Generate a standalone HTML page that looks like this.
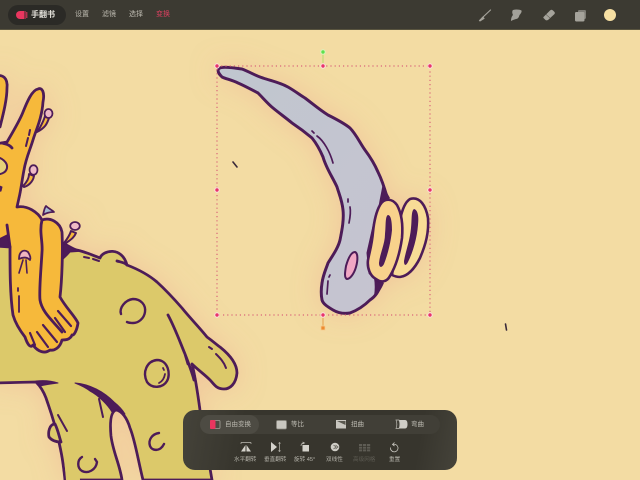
<!DOCTYPE html>
<html lang="zh">
<head>
<meta charset="utf-8">
<title>手翻书</title>
<style>
html,body{margin:0;padding:0;width:640px;height:480px;overflow:hidden;background:#f3dca3}
body{position:relative;font-family:"Liberation Sans","Noto Sans CJK SC",sans-serif}
#wrap{position:absolute;left:0;top:0;width:640px;height:480px;overflow:hidden;filter:blur(.35px)}
svg{position:absolute;left:0;top:0}
.t{position:absolute;white-space:nowrap;line-height:10px;height:10px}
#bar{position:absolute;left:0;top:0;width:640px;height:29px;background:#3c3a32;border-bottom:1px solid #59543f}
#pill{position:absolute;left:8px;top:5px;width:58px;height:20px;border-radius:10px;background:#2b2a26}
#panel{position:absolute;left:183px;top:410px;width:274px;height:60px;border-radius:12px;background:linear-gradient(100deg,#45433a 0%,#37352d 22%,#37352d 85%,#45433a 100%)}
#tabs{position:absolute;left:17px;top:5px;width:240px;height:19px;border-radius:10px;background:#413f37}
#sel{position:absolute;left:17px;top:5px;width:59px;height:19px;border-radius:10px;background:#4d4b43}
.top{font-size:7px;color:#bdbab0;top:10px}
.tab{font-size:6.5px;color:#bdbbb2;top:420px}
.low{font-size:5.6px;color:#b5b3aa;top:455px}
</style>
</head>
<body>
<div id="wrap">
<svg width="640" height="480" viewBox="0 0 640 480">
<defs>
<filter id="g" x="-25%" y="-25%" width="150%" height="150%"><feDropShadow dx="0" dy="0" stdDeviation="13" flood-color="#efae92" flood-opacity=".5"/></filter>
<linearGradient id="h" x1="0" y1="0" x2="1" y2="1"><stop offset="0" stop-color="#c0c6cf"/><stop offset="1" stop-color="#c6c4d0"/></linearGradient>
</defs>
<g filter="url(#g)" stroke="#4d1a58" stroke-width="2.8" stroke-linejoin="round" stroke-linecap="round">
<!-- body -->
<path fill="#dcc96a" d="M-5 245 L63 252 C72 246 85 252 100 258 C103 250 122 246 127 265 C140 270 150 276 157 282 C168 292 175 300 182 308 C190 318 200 328 207 337 C214 342 217 345 220 347 C230 355 237 364 237 373 C236 384 230 389 224 389 C216 389 214 384 210 380 C204 374 198 370 192 364 C195 375 197 388 200 410 L212 480 L143 480 C138 460 135 440 130 428 C127 418 122 411 116 410 C110 412 110 425 111 436 C113 452 120 465 122 480 L65 480 C63 462 62 455 58 438 C54 420 50 410 46 398 C43 390 40 386 36 382 L-5 383 Z"/>
<path fill="#4d1a58" stroke-width="1" d="M36 381 C45 380 52 381 58 383 C50 384 44 385 40 386 Z"/>
<path fill="#dcc96a" stroke="none" d="M58 385 L75 385 L80 480 L66 480 Z"/>
<path fill="#4d1a58" stroke-width="1" d="M75 383 C90 384 104 392 114 402 C119 406 122 409 125 414 C120 410 115 409 112 412 C108 405 98 395 90 391 C85 387 80 385 75 383 Z"/>
<path fill="#4d1a58" stroke-width="1" d="M63 242 C70 246 78 251 84 251 L70 252 C67 256 64 258 62 260 Z"/>
<path fill="none" d="M127 265 C124 262 120 262 117 261"/>
<path fill="none" stroke-width="2" d="M84 257 L89 258 M93 259 L99 261"/>
<path fill="none" d="M168 315 C175 328 180 342 185 354 C188 362 192 372 194 380 M185 354 L188 364"/>
<path fill="none" stroke-width="2" d="M209 347 L212 349 M216 354 C220 358 224 362 226 368"/>
<path fill="none" stroke-width="2" d="M99 399 L103 417 M58 415 L67 431"/>
<path fill="#dcc96a" d="M55 424 C49 424 48 433 49 437 C52 441 56 442 61 442 C59 436 58 430 55 424 Z"/>
<path fill="none" stroke-width="2.4" d="M121 314 C119 308 125 300 133 299 C141 299 146 305 145 312 C144 319 138 323 133 323 C131 323 129 323 127 322"/>
<path fill="none" stroke-width="2.4" d="M147 382 C142 372 147 361 157 360 C168 360 171 374 167 381 C163 388 152 389 147 382 Z"/>
<path fill="none" stroke-width="1.8" d="M163 368 L164 370 M165 374 C164 380 161 382 159 383"/>
<path fill="none" stroke-width="2.4" d="M159 433 C152 434 148 440 150 446 C152 451 160 452 164 444"/>
<path fill="none" stroke-width="2.4" d="M82 457 C77 460 77 468 82 471 C88 474 96 470 97 462 L95 459"/>
<!-- figure -->
<path fill="#f6b93a" d="M-5 76 C3 74 8 78 7 88 C7 100 3 115 0 127 L-5 127 Z"/>
<path fill="#f6b93a" d="M-5 144 L7 142 C14 130 20 120 23 112 C27 102 32 90 38 89 C42 87 45 92 43 102 C42 118 36 130 33 140 C30 150 26 158 24 170 C22 180 21 190 19 198 L17 207 C27 205 38 212 42 220 C50 217 60 222 62 232 C63 250 62 280 60 297 C66 308 75 316 78 323 C77 330 74 336 72 335 C70 340 65 340 62 340 C60 348 54 351 50 350 C45 354 38 352 33 345 C30 349 27 343 25 337 C18 328 15 322 13 315 C10 295 10 270 10 247 L-5 246 Z"/>
<path fill="none" d="M42 220 C39 232 43 242 42 252 C41 270 39 290 40 300 C42 312 52 320 62 332 M7 225 L10 247"/>
<path fill="#4d1a58" stroke-width="1" d="M-5 241 L7 235 L10 247 L-5 247 Z"/>
<path fill="none" d="M2 143 C6 144 10 145 12 148"/>
<path fill="none" stroke-width="2" d="M30 130 L29 135 M28 138 L26 146"/>
<path fill="none" stroke-width="1.8" d="M18 288 L18 291 M19 296 L19 312"/>
<path fill="none" stroke-width="2.2" d="M30 333 L35 345 M37 332 L48 347 M43 325 L57 342 M55 318 L65 332 M58 311 L71 326"/>
<path fill="#e6d27a" stroke-width="2" d="M-5 157 C2 157 8 163 7 168 C6 173 0 175 -5 174 Z"/>
<path fill="#4d1a58" stroke-width="1" d="M-3 185 L2 187 L1 191 L-3 192 Z"/>
<!-- mushrooms -->
<path fill="#f6b93a" stroke-width="2" d="M38 131 C42 124 44 120 45 116 L49 118 C47 124 45 128 37 132 Z"/>
<ellipse cx="48.500" cy="113.500" rx="4" ry="4.500" fill="#eebac6" stroke-width="1.800"/>
<path fill="#f6b93a" stroke-width="2" d="M23 186 C27 182 29 178 29 174 L34 176 C33 182 28 186 24 187 Z"/>
<ellipse cx="33.500" cy="170" rx="4" ry="4.800" fill="#eebac6" stroke-width="1.800"/>
<path fill="#f6b93a" stroke-width="2" d="M64 243 C68 238 70 234 71 231 L76 233 C74 238 70 240 65 244 Z"/>
<ellipse cx="75" cy="226" rx="4.800" ry="4" fill="#eebac6" stroke-width="1.800"/>
<path fill="#a6bcd0" stroke-width="1.800" d="M43 215 C44 210 45 207 46 206 C48 208 52 210 54 212 C50 212 46 213 43 215 Z"/>
<path fill="#f0b6c0" stroke-width="1.800" d="M19 259 C19 251 24 249 28 252 C30 255 31 258 30 260 C27 257 23 257 19 259 Z"/>
<path fill="none" stroke-width="1.600" d="M23 260 L19 273 M26 260 L27 273"/>
</g>
<!-- horn -->
<g filter="url(#g)" stroke="#4d1a58" stroke-linejoin="round" stroke-linecap="round">
<path fill="url(#h)" stroke-width="3" d="M218 70 C219 66 228 67 242 69 C250 72 256 76 263 78 C272 81 281 83 288 87 C295 91 300 95 305 98 C313 104 320 110 328 115 C336 119 344 123 350 128 C356 134 360 143 365 150 C371 158 375 165 378 172 C381 178 384 186 387 197 L377 213 L368 253 L370 273 L382 283 C378 292 376 296 370 300 C364 306 358 310 350 313 C344 314 338 313 333 310 C328 307 323 304 322 300 C321 295 321 289 322 283 C323 275 326 269 328 263 C333 255 338 248 340 240 C342 230 344 220 343 210 C342 200 339 194 337 187 C333 178 326 168 323 157 C320 150 316 143 312 138 C306 133 298 127 292 123 C286 118 279 113 273 108 C268 104 263 98 258 93 C252 90 245 86 238 83 C232 80 226 79 222 77 C220 75 218 73 218 70 Z"/>
<path fill="#4d1a58" stroke="none" d="M383 182 C385 188 387 193 390 198 L378 214 C378 205 381 195 383 182 Z"/>
<path fill="#4d1a58" stroke="none" d="M374 278 L384 283 C381 290 378 294 374 296 C375 290 375 284 374 278 Z"/>
<path fill="none" stroke-width="1.700" d="M312 131 L314 133 M317 136 C324 141 330 152 333 163 M348 199 L348 202 M350 207 C351 212 350 218 349 223 M330 275 L329 277 M328 281 L327 294"/>
<path fill="#f1a7c4" stroke-width="2" d="M355 252 C358 253 358 260 356 267 C354 274 350 279 347 279 C344 278 345 272 346 266 C348 259 351 252 355 252 Z"/>
<path fill="#f8dc96" stroke-width="2.600" d="M410 199 C420 196 426 206 428 218 C429 232 426 244 420 258 C415 268 408 276 400 277 C396 277 394 276 392 275 L400 220 C402 210 405 202 410 199 Z"/>
<path fill="#4d1a58" stroke="none" d="M414 209 C418 210 419 217 418 225 C417 238 413 252 408 262 C406 266 404 266 404 261 C406 250 410 240 411 228 C412 220 411 211 414 209 Z"/>
<path fill="#f8d28c" stroke-width="2.600" d="M380 205 C384 198 392 198 397 205 C402 214 403 226 402 238 C400 252 396 266 390 276 C387 282 381 283 376 279 C370 276 367 268 368 260 C370 250 372 244 373 232 C374 222 376 212 380 205 Z"/>
<path fill="#4d1a58" stroke="none" d="M388 215 C391 215 392 222 392 230 C391 241 388 254 384 264 C382 268 379 268 379 263 C380 253 385 244 385 234 C386 226 385 216 388 215 Z"/>
</g>
<path fill="#333" stroke="#3a2a3a" stroke-width="1.600" stroke-linecap="round" d="M233 162 L237 167 M505.500 324 L506.500 330"/>
<!-- selection -->
<g fill="none" stroke="#d9667a" stroke-width="1.200" stroke-dasharray="1.200 3">
<path d="M217 66 H430 V315 H217 Z"/>
</g>
<path d="M323 52 V66" stroke="#b4dc6e" stroke-width="1"/>
<path d="M323 315 V328" stroke="#e5a04a" stroke-width="1"/>
<g fill="#e8336b" stroke="#fbe3e0" stroke-width="1">
<circle cx="217" cy="66" r="2.200"/><circle cx="323" cy="66" r="2.200"/><circle cx="430" cy="66" r="2.200"/>
<circle cx="217" cy="190" r="2.200"/><circle cx="430" cy="190" r="2.200"/>
<circle cx="217" cy="315" r="2.200"/><circle cx="323" cy="315" r="2.200"/><circle cx="430" cy="315" r="2.200"/>
</g>
<circle cx="323" cy="52" r="2.200" fill="#5fe04d" stroke="#d8f5c0" stroke-width="1"/>
<rect x="321" y="326" width="4" height="4" fill="#ee8a2e" stroke="#f6cc90" stroke-width=".8"/>
</svg>

<div id="bar"></div>
<div id="pill"></div>
<svg width="640" height="30" viewBox="0 0 640 30">
<path d="M20 11 H24 V19 H20 A4 4 0 0 1 20 11 Z" fill="#e8365f"/>
<path d="M25 11 V19 M26.800 12 V18" stroke="#e8365f" stroke-width="1"/>
<!-- brush -->
<path d="M490.500 10 L482 18" stroke="#a5a39b" stroke-width="1.200" stroke-linecap="round"/>
<path d="M483 17 L479.500 20.500 L480 21 L484 18.500 Z" fill="#a5a39b" stroke="#a5a39b" stroke-width="1"/>
<!-- smudge -->
<path d="M513 10 C516 9 520 9.500 521.500 10.500 C522 12 520.500 14 519.500 15 C519 17 518 19 516 19 L513 20 L511 21 C511 18 512 16 513 15 C512 13 512 11 513 10 Z" fill="#a3a19a"/>
<!-- eraser -->
<path d="M544 16.500 L550 10.500 C551 9.500 552 9.500 553 10.500 L554.500 12 C555 13 555 13.500 554 14.500 L548 20 C547 20.500 546 20.500 545.500 20 L543.500 18 C543 17.500 543.500 17 544 16.500 Z" fill="#a5a39b"/>
<path d="M546 14.500 L550 18" stroke="#3c3a32" stroke-width=".5"/>
<!-- layers -->
<rect x="578" y="10" width="8" height="9" rx="1.200" fill="#7f7d76"/>
<rect x="575" y="12" width="9.500" height="9.500" rx="1.200" fill="#a5a39b"/>
<circle cx="610" cy="15" r="6" fill="#f7e0a3"/>
</svg>
<span class="t" style="left:31px;top:10px;font-size:8px;font-weight:bold;color:#e8e6df">手翻书</span>
<span class="t top" style="left:75px">设置</span>
<span class="t top" style="left:102px">滤镜</span>
<span class="t top" style="left:129px">选择</span>
<span class="t top" style="left:156px;color:#d8405f">变换</span>

<div id="panel"><div id="tabs"></div><div id="sel"></div></div>
<svg width="640" height="480" viewBox="0 0 640 480">
<rect x="210.500" y="420.500" width="9.500" height="8" rx="1" fill="none" stroke="#a5a39b" stroke-width=".8"/>
<rect x="210" y="420" width="5.500" height="9" rx="1" fill="#e8365f"/>
<rect x="276.500" y="420.500" width="10" height="8.500" rx="1.200" fill="#c9c7c0" stroke="#8b8980" stroke-width=".7"/>
<path d="M336 420 H346 V428.500 H336 Z" fill="#c9c7c0"/>
<path d="M337 421 H345.500 V425 Z" fill="#5a584f"/>
<path d="M399 420 H405 C407 420 407.500 422 407.500 424.300 C407.500 426.500 407 428.500 405 428.500 H399 C400 426 400 422.500 399 420 Z" fill="#cfcdc6"/>
<path d="M396 420 H399 C400 422.500 400 426 399 428.500 H396 C397 426 397 422.500 396 420 Z" fill="none" stroke="#bcbab2" stroke-width=".7"/>
<!-- flip h -->
<path d="M241 442.500 H251 M241 442.500 V444 M251 442.500 V444" stroke="#bdbbb3" stroke-width=".7" fill="none"/>
<path d="M245.500 445 V451.500 H241 Z M246.500 445 V451.500 H251 Z" fill="#d4d2cb"/>
<!-- flip v -->
<path d="M271 442 L277 447 L271 452 Z" fill="#d4d2cb"/>
<path d="M279.500 442.500 V451.500 M278.500 443.500 L279.500 442.500 L280.500 443.500 M278.500 450.500 L279.500 451.500 L280.500 450.500" stroke="#bdbbb3" stroke-width=".7" fill="none"/>
<!-- rotate -->
<rect x="302.500" y="445" width="6.500" height="6.500" fill="#d4d2cb"/>
<path d="M301 446 C301 444 302 443 304 443 M302.500 442 L304.500 443 L302.500 444" stroke="#bdbbb3" stroke-width=".7" fill="none"/>
<!-- bilinear -->
<circle cx="335" cy="447" r="4.300" fill="#cfcdc6"/>
<path d="M333.500 445 L336 447 L333.500 449 M335.500 445 L338 447 L335.500 449" stroke="#5a584f" stroke-width=".8" fill="none"/>
<!-- grid -->
<g fill="#5e5c54"><rect x="359" y="444" width="3.200" height="2"/><rect x="363" y="444" width="3.200" height="2"/><rect x="367" y="444" width="3.200" height="2"/><rect x="359" y="446.700" width="3.200" height="2"/><rect x="363" y="446.700" width="3.200" height="2"/><rect x="367" y="446.700" width="3.200" height="2"/><rect x="359" y="449.400" width="3.200" height="2"/><rect x="363" y="449.400" width="3.200" height="2"/><rect x="367" y="449.400" width="3.200" height="2"/></g>
<!-- reset -->
<path d="M393 444.500 A3.800 3.800 0 1 1 390.500 447.500" stroke="#c9c7c0" stroke-width=".8" fill="none"/>
<path d="M394.500 442.500 L392.500 444.500 L394.500 446" stroke="#c9c7c0" stroke-width=".8" fill="none"/>
</svg>
<span class="t tab" style="left:225px">自由变换</span>
<span class="t tab" style="left:291px">等比</span>
<span class="t tab" style="left:351px">扭曲</span>
<span class="t tab" style="left:411px">弯曲</span>
<span class="t low" style="left:234px">水平翻转</span>
<span class="t low" style="left:264px">垂直翻转</span>
<span class="t low" style="left:294px">旋转 45°</span>
<span class="t low" style="left:326px">双线性</span>
<span class="t low" style="left:353px;color:#5e5c54">高级网格</span>
<span class="t low" style="left:389px">重置</span>
</div>
</body>
</html>
